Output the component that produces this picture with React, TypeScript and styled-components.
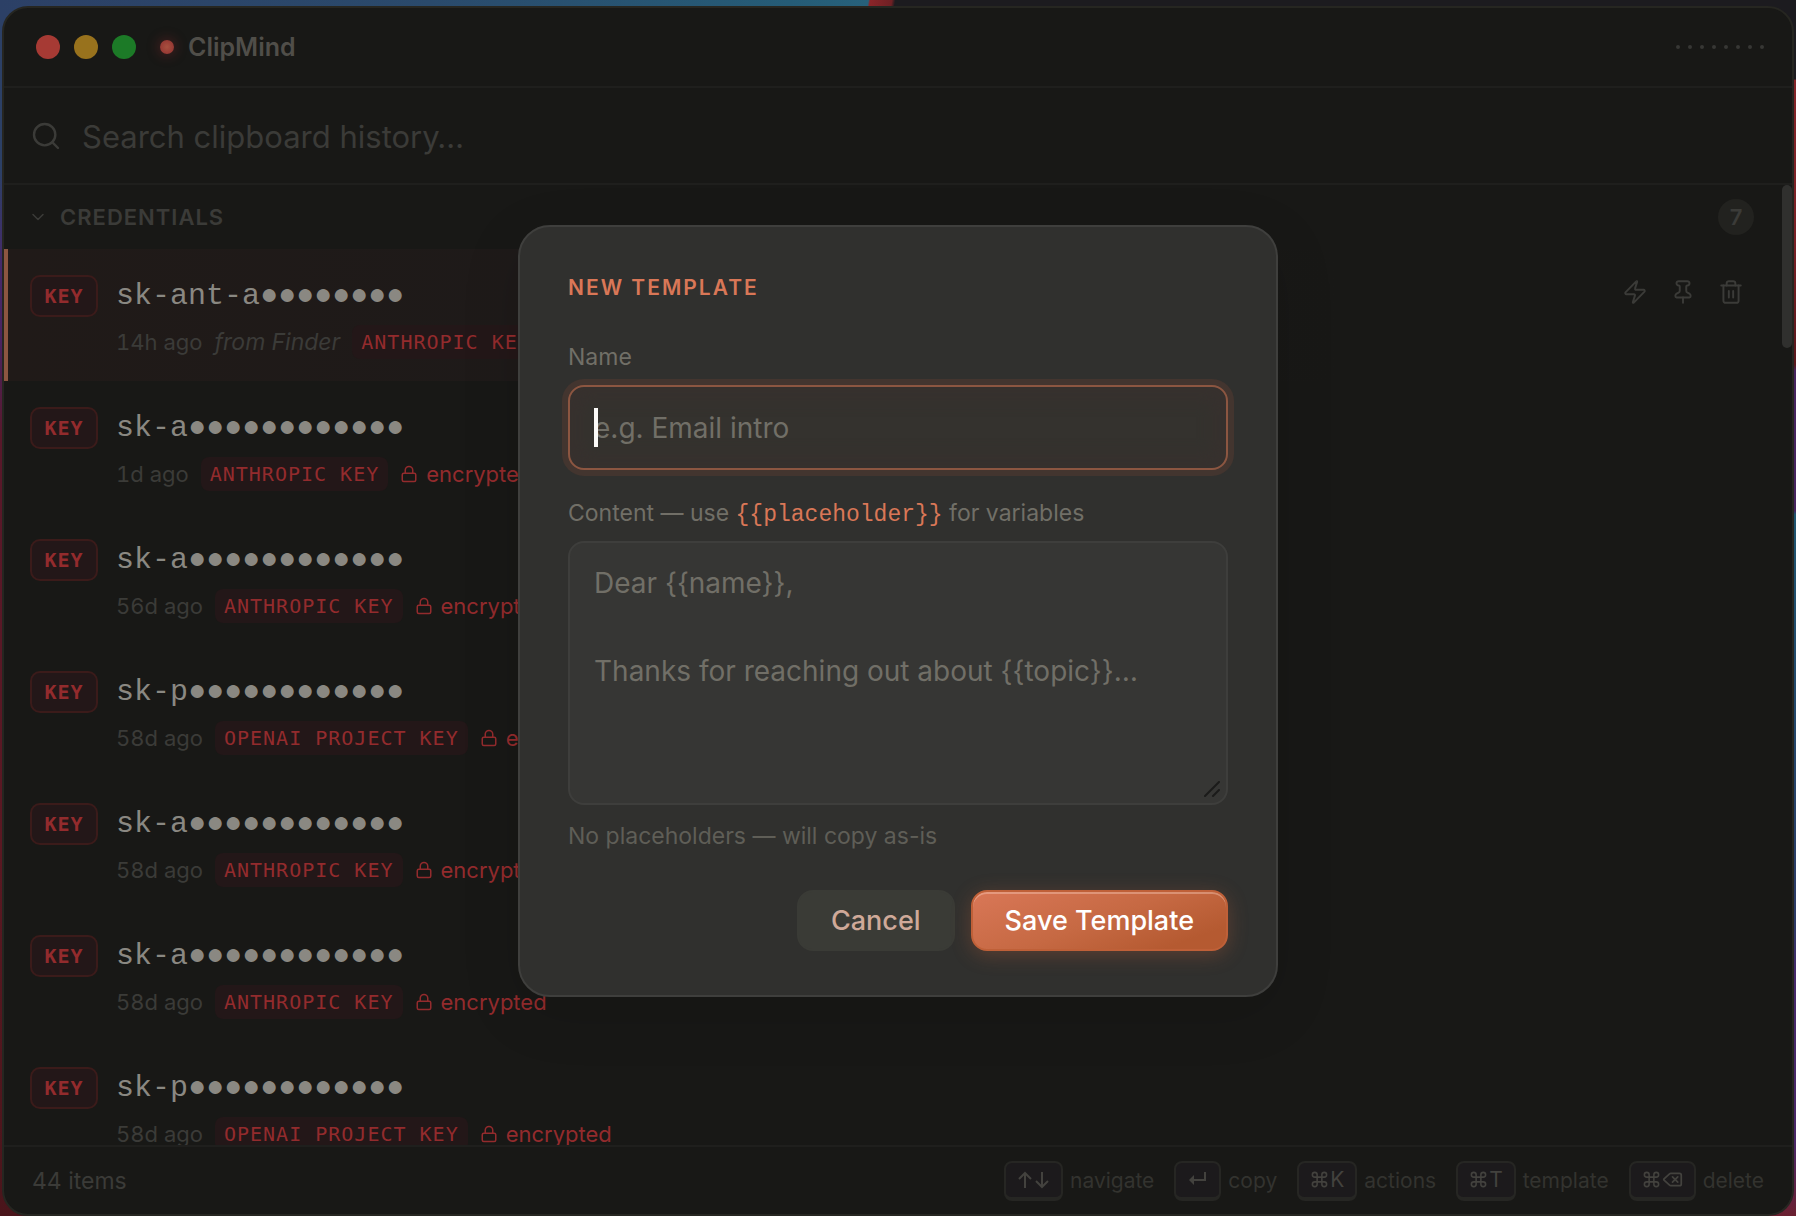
import React from "react";
import styled, { createGlobalStyle, css } from "styled-components";
import {
  ChevronDown,
  Command,
  Delete,
  Lock,
  Pin,
  Search,
  Trash2,
  Zap,
} from "lucide-react";

const sans = `Inter, "Liberation Sans", sans-serif`;
const mono = `"Liberation Mono", "DejaVu Sans Mono", monospace`;
const tagMono = `"DejaVu Sans Mono", "Liberation Mono", monospace`;

const c = {
  window: "#181816",
  line: "#1f1f1d",
  dim: "#3b3b38",
  dimmer: "#33332f",
  value: "#8a8882",
  red: "#932b2d",
  redSoft: "#231718",
  redLine: "#3b1b1a",
  accent: "#d97757",
  modal: "#30302e",
  modalLine: "#3f3f3d",
  field: "#363634",
  label: "#716f67",
};

const GlobalStyle = createGlobalStyle`
  *, *::before, *::after { box-sizing: border-box; }
  body { margin: 0; background: #1c1b1f; font-family: ${sans}; }
  button, input, textarea { font-family: inherit; margin: 0; }
  p, h1, h2, ul { margin: 0; padding: 0; }
  svg { display: block; flex: none; }
`;

const Desktop = styled.div`
  height: 100vh;
  padding: 6px 2px 0;
  overflow: hidden;
  background:
    linear-gradient(100deg, #2c4066 0%, #2a4a6c 24%, #255c77 44%, #27617b 48.3%, #8b2529 48.4%, #6e2024 49.6%, #1c1b1f 49.8%)
      top / 100% 12px no-repeat,
    linear-gradient(180deg, #2c4066 0%, #2c4066 14%, #45296a 22%, #4a2360 28%, #58182a 36%, #5a1822 70%, #4a151b 100%)
      left / 50% 100% no-repeat,
    linear-gradient(180deg, #1c1b1f 0%, #1c1b1f 6.5%, #842529 6.6%, #7a2126 20%, #5a181c 30%, #46245f 30.5%, #46245f 42%, #1f5570 42.3%, #24476b 60%, #2d3a66 76%, #46296c 80%, #4a2768 94%, #6b2030 100%)
      right / 50% 100% no-repeat;
`;

const Window = styled.div`
  position: relative;
  height: 100%;
  display: flex;
  flex-direction: column;
  overflow: hidden;
  background: ${c.window};
  border: 2px solid #262621;
  border-radius: 26px;
`;

const TitleBar = styled.header`
  display: flex;
  align-items: center;
  height: 80px;
  padding: 0 28px 0 32px;
  border-bottom: 2px solid ${c.line};
  flex: none;
`;

const Lights = styled.div`
  display: flex;
  gap: 14px;
`;

const Light = styled.button<{ $tone: string }>`
  width: 24px;
  height: 24px;
  padding: 0;
  border: 0;
  border-radius: 50%;
  background: ${(p) => p.$tone};
`;

const Brand = styled.h1`
  display: flex;
  align-items: center;
  gap: 14px;
  margin-left: 24px;
  color: #504e49;
  font-size: 25px;
  line-height: 32px;
  font-weight: 600;
`;

const BrandDot = styled.span`
  width: 14px;
  height: 14px;
  border-radius: 50%;
  background: radial-gradient(circle, #a8503f 0%, #8f2f2f 100%);
  box-shadow: 0 0 12px 2px rgba(147, 43, 45, 0.35);
`;

const Grip = styled.div`
  display: flex;
  gap: 8px;
  margin-left: auto;

  span {
    width: 4px;
    height: 4px;
    border-radius: 50%;
    background: #373734;
  }
`;

const SearchBar = styled.label`
  display: flex;
  align-items: center;
  gap: 20px;
  height: 97px;
  padding: 0 26px;
  border-bottom: 2px solid ${c.line};
  color: ${c.dim};
  flex: none;
`;

const SearchInput = styled.input`
  flex: 1;
  min-width: 0;
  height: 48px;
  padding: 2px 0 0;
  border: 0;
  outline: 0;
  background: transparent;
  color: ${c.value};
  font-size: 31px;

  &::placeholder {
    color: ${c.dim};
    opacity: 1;
  }
`;

const Body = styled.main`
  display: flex;
  flex: 1;
  min-height: 0;
`;

const List = styled.div`
  flex: 1;
  min-width: 0;
  overflow: hidden;
`;

const ScrollTrack = styled.div`
  width: 10px;
  flex: none;
`;

const ScrollThumb = styled.div`
  height: 17%;
  border-radius: 5px;
  background: #30302e;
`;

const Section = styled.button`
  display: flex;
  align-items: center;
  gap: 12px;
  width: 100%;
  height: 64px;
  padding: 0 28px 0 24px;
  border: 0;
  background: transparent;
  color: ${c.dim};
  font-size: 22px;
  font-weight: 600;
  letter-spacing: 1px;
  text-align: left;
`;

const Count = styled.span`
  width: 36px;
  margin-left: auto;
  border-radius: 18px;
  background: #22221f;
  line-height: 36px;
  letter-spacing: 0;
  text-align: center;
`;

const Items = styled.ul`
  list-style: none;
`;

const Item = styled.li<{ $selected?: boolean }>`
  display: flex;
  gap: 18px;
  height: 132px;
  padding: 24px 38px 0 22px;
  border-left: 4px solid transparent;
  ${(p) =>
    p.$selected &&
    css`
      border-left-color: #8c5641;
      background: linear-gradient(90deg, #201a18 0%, #1e1a19 30%, #181816 75%);
    `}
`;

const Badge = styled.span`
  width: 68px;
  height: 42px;
  margin-top: 2px;
  border: 2px solid ${c.redLine};
  border-radius: 10px;
  background: ${c.redSoft};
  color: ${c.red};
  font: bold 20px/38px ${tagMono};
  letter-spacing: 1px;
  text-align: center;
  flex: none;
`;

const Entry = styled.div`
  flex: 1;
  min-width: 0;
`;

const Value = styled.p`
  height: 44px;
  color: ${c.value};
  font: 30px/46px ${mono};
  white-space: nowrap;
`;

const Meta = styled.div`
  display: flex;
  align-items: center;
  gap: 12px;
  height: 34px;
  margin-top: 8px;
  color: ${c.dim};
  font-size: 22px;
  line-height: 34px;
  font-variant-numeric: tabular-nums;
  white-space: nowrap;

  em {
    font-size: 23px;
  }
`;

const Chip = styled.span`
  padding: 0 9px;
  border-radius: 8px;
  background: ${c.redSoft};
  color: ${c.red};
  font: 20px/34px ${tagMono};
  letter-spacing: 1px;
`;

const Secure = styled.span`
  display: flex;
  align-items: center;
  gap: 8px;
  color: ${c.red};
`;

const Actions = styled.div`
  display: flex;
  gap: 22px;
  padding-top: 6px;
`;

const IconButton = styled.button`
  height: 26px;
  padding: 0;
  border: 0;
  background: transparent;
  color: ${c.dim};
`;

const Footer = styled.footer`
  display: flex;
  align-items: center;
  justify-content: space-between;
  height: 69px;
  padding: 0 28px;
  border-top: 2px solid ${c.line};
  color: ${c.dim};
  font-size: 23px;
  flex: none;
`;

const Hints = styled.div`
  display: flex;
  gap: 20px;
  color: ${c.dimmer};
  font-size: 21px;
`;

const Hint = styled.span`
  display: flex;
  align-items: center;
  gap: 7px;
`;

const Kbd = styled.kbd`
  display: flex;
  align-items: center;
  gap: 1px;
  height: 40px;
  padding: 0 11px;
  border: 2px solid #262623;
  border-bottom-width: 4px;
  border-radius: 8px;
  background: #1c1a1c;
  color: #43423e;
  font: 21px/34px ${sans};
`;

const Overlay = styled.div`
  position: absolute;
  inset: 0;
  display: flex;
  align-items: center;
  justify-content: center;
`;

const Dialog = styled.form`
  width: 760px;
  max-width: 100%;
  padding: 44px 48px;
  border: 2px solid ${c.modalLine};
  border-radius: 32px;
  background: ${c.modal};
  box-shadow: 0 16px 60px rgba(0, 0, 0, 0.12);
`;

const DialogTitle = styled.h2`
  margin-bottom: 34px;
  color: ${c.accent};
  font-size: 21px;
  line-height: 34px;
  font-weight: 600;
  letter-spacing: 2px;
`;

const FieldLabel = styled.label`
  display: block;
  margin-bottom: 10px;
  color: ${c.label};
  font-size: 23px;
  line-height: 36px;

  code {
    color: ${c.accent};
    font: 23px/1 ${mono};
  }
`;

const FieldBox = styled.div`
  position: relative;
  display: flex;

  & + label {
    margin-top: 25px;
  }
`;

const field = css`
  width: 100%;
  border-radius: 16px;
  outline: 0;
  color: #ecebe6;
  font-size: 28px;
  line-height: 44px;

  &::placeholder {
    color: ${c.label};
    opacity: 1;
  }
`;

const NameInput = styled.input`
  ${field}
  height: 85px;
  padding: 0 24px;
  border: 2px solid #8c5641;
  background: #34322e;
  box-shadow: 0 0 0 6px #43352f, inset 0 0 14px 14px #37312e;
`;

const Caret = styled.span`
  position: absolute;
  left: 26px;
  top: 23px;
  width: 4px;
  height: 39px;
  background: #fbfaf8;
`;

const ContentArea = styled.textarea`
  ${field}
  display: block;
  height: 264px;
  padding: 18px 24px;
  border: 2px solid #3e3e3c;
  background: ${c.field};
  resize: none;
`;

const ResizeGrip = styled.svg`
  position: absolute;
  right: 8px;
  bottom: 8px;
`;

const HelpText = styled.p`
  margin-top: 13px;
  color: #5f5e57;
  font-size: 23px;
  line-height: 36px;
`;

const DialogActions = styled.div`
  display: flex;
  justify-content: flex-end;
  gap: 16px;
  margin-top: 36px;
`;

const Button = styled.button<{ $primary?: boolean }>`
  height: 61px;
  padding: 0 32px;
  border: 2px solid #3a3b36;
  border-radius: 16px;
  background: #3a3b36;
  color: #cfa999;
  font-size: 27px;
  font-weight: 500;
  ${(p) =>
    p.$primary &&
    css`
      border-color: #bf6038;
      background: linear-gradient(160deg, #d97757 0%, #c66943 50%, #b55a31 85%);
      color: #fff;
      box-shadow: 0 4px 20px rgba(200, 100, 60, 0.3), inset 0 2px 0 rgba(255, 220, 205, 0.35);
    `}
`;

const dots = (n: number) => "●".repeat(n);

const items = [
  { value: "sk-ant-a" + dots(8), age: "14h ago", source: "from Finder", kind: "ANTHROPIC KEY" },
  { value: "sk-a" + dots(12), age: "1d ago", kind: "ANTHROPIC KEY" },
  { value: "sk-a" + dots(12), age: "56d ago", kind: "ANTHROPIC KEY" },
  { value: "sk-p" + dots(12), age: "58d ago", kind: "OPENAI PROJECT KEY" },
  { value: "sk-a" + dots(12), age: "58d ago", kind: "ANTHROPIC KEY" },
  { value: "sk-a" + dots(12), age: "58d ago", kind: "ANTHROPIC KEY" },
  { value: "sk-p" + dots(12), age: "58d ago", kind: "OPENAI PROJECT KEY" },
];

const ArrowsGlyph = () => (
  <svg width="33" height="20" viewBox="0 0 33 20" fill="none" stroke="currentColor" strokeWidth="2">
    <path d="M8 18V3M2 9l6-6 6 6M25 2v15M19 11l6 6 6-6" />
  </svg>
);

const ReturnGlyph = () => (
  <svg width="21" height="20" viewBox="0 0 21 20" fill="none" stroke="currentColor" strokeWidth="2">
    <path d="M18 2v8H7" />
    <path d="M7 5v10L2 10z" fill="currentColor" stroke="none" />
  </svg>
);

const CommandGlyph = () => <Command size={19} strokeWidth={2} />;

const hints = [
  { label: "navigate", keys: <ArrowsGlyph /> },
  { label: "copy", keys: <ReturnGlyph /> },
  { label: "actions", keys: <><CommandGlyph />K</> },
  { label: "template", keys: <><CommandGlyph />T</> },
  { label: "delete", keys: <><CommandGlyph /><Delete size={21} strokeWidth={2} /></> },
];

export default function App() {
  return (
    <>
      <GlobalStyle />
      <Desktop>
        <Window>
          <TitleBar>
            <Lights>
              <Light type="button" aria-label="Close" $tone="#a63a34" />
              <Light type="button" aria-label="Minimize" $tone="#98721d" />
              <Light type="button" aria-label="Zoom" $tone="#1c7a27" />
            </Lights>
            <Brand>
              <BrandDot />
              ClipMind
            </Brand>
            <Grip>
              {Array.from({ length: 8 }, (_, i) => (
                <span key={i} />
              ))}
            </Grip>
          </TitleBar>

          <SearchBar>
            <Search size={32} strokeWidth={1.8} aria-hidden />
            <SearchInput type="text" aria-label="Search clipboard history" placeholder="Search clipboard history…" />
          </SearchBar>

          <Body>
            <List>
              <Section type="button" aria-expanded="true">
                <ChevronDown size={20} strokeWidth={1.8} />
                CREDENTIALS
                <Count>7</Count>
              </Section>
              <Items>
                {items.map((item, i) => (
                  <Item key={i} $selected={i === 0}>
                    <Badge>KEY</Badge>
                    <Entry>
                      <Value>{item.value}</Value>
                      <Meta>
                        <span>{item.age}</span>
                        {item.source && <em>{item.source}</em>}
                        <Chip>{item.kind}</Chip>
                        <Secure>
                          <Lock size={18} strokeWidth={2} />
                          encrypted
                        </Secure>
                      </Meta>
                    </Entry>
                    {i === 0 && (
                      <Actions>
                        <IconButton type="button" aria-label="Run">
                          <Zap size={26} strokeWidth={1.8} />
                        </IconButton>
                        <IconButton type="button" aria-label="Pin">
                          <Pin size={26} strokeWidth={1.8} />
                        </IconButton>
                        <IconButton type="button" aria-label="Delete">
                          <Trash2 size={26} strokeWidth={1.8} />
                        </IconButton>
                      </Actions>
                    )}
                  </Item>
                ))}
              </Items>
            </List>
            <ScrollTrack>
              <ScrollThumb />
            </ScrollTrack>
          </Body>

          <Footer>
            <span>44 items</span>
            <Hints>
              {hints.map((hint) => (
                <Hint key={hint.label}>
                  <Kbd>{hint.keys}</Kbd>
                  {hint.label}
                </Hint>
              ))}
            </Hints>
          </Footer>

          <Overlay>
            <Dialog role="dialog" aria-labelledby="dialog-title">
              <DialogTitle id="dialog-title">NEW TEMPLATE</DialogTitle>
              <FieldLabel htmlFor="name">Name</FieldLabel>
              <FieldBox>
                <NameInput id="name" type="text" placeholder="e.g. Email intro" />
                <Caret />
              </FieldBox>
              <FieldLabel htmlFor="content">
                Content — use <code>{"{{placeholder}}"}</code> for variables
              </FieldLabel>
              <FieldBox>
                <ContentArea
                  id="content"
                  placeholder={"Dear {{name}},\n\nThanks for reaching out about {{topic}}…"}
                />
                <ResizeGrip width="16" height="16" viewBox="0 0 16 16" stroke="#1b1b1a" strokeWidth="2" strokeLinecap="round">
                  <path d="M1 15L15 1M9 15L15 9" />
                </ResizeGrip>
              </FieldBox>
              <HelpText>No placeholders — will copy as-is</HelpText>
              <DialogActions>
                <Button type="button">Cancel</Button>
                <Button type="button" $primary>
                  Save Template
                </Button>
              </DialogActions>
            </Dialog>
          </Overlay>
        </Window>
      </Desktop>
    </>
  );
}
